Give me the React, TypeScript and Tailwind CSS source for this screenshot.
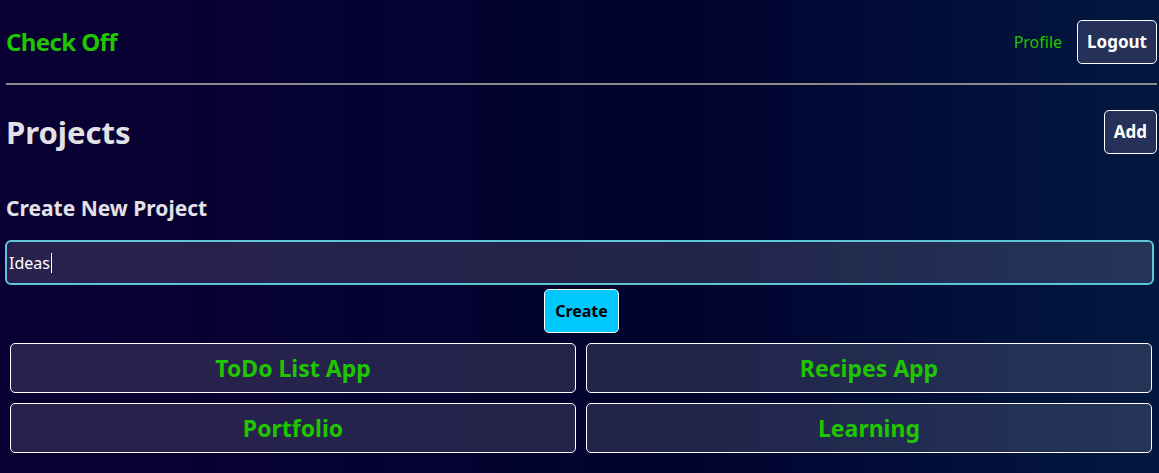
export default function App() {
  const projects = ['ToDo List App', 'Recipes App', 'Portfolio', 'Learning'];

  return (
    <main
      className="min-h-screen w-full bg-gradient-to-r from-[#0a0033] via-[#01042f] via-60% to-[#03183f] pl-[6px] pr-[2px] text-[#e2e2e6]"
      style={{ fontFamily: '"Noto Sans", "Open Sans", sans-serif' }}
    >
      {/* header */}
      <header className="flex h-[83px] items-center justify-between">
        <h1 className="text-[24px] font-bold tracking-tight text-[#1fc600]">Check Off</h1>
        <nav className="flex items-center gap-[15px]">
          <a className="text-[16px] text-[#1fc600]">Profile</a>
          <button className="h-[44px] rounded-[5px] border border-white bg-[#26315a] px-[9px] text-[17px] font-bold text-white">
            Logout
          </button>
        </nav>
      </header>
      <hr className="border-t-2 border-[#8a8a8a]" />

      {/* projects title */}
      <div className="mt-[25px] flex items-center justify-between">
        <h2 className="text-[31px] font-bold leading-none">Projects</h2>
        <button className="h-[44px] rounded-[5px] border border-white bg-[#26315a] px-[9px] text-[17px] font-bold text-white">
          Add
        </button>
      </div>

      {/* create form */}
      <h3 className="mt-[44px] text-[21px] font-bold leading-none">Create New Project</h3>
      <div className="mt-[21px] pr-[3px]">
        <div className="-ml-[1px] flex h-[45px] items-center rounded-[6px] border-2 border-[#5cc5d6] bg-white/[0.13] px-[2px] text-[16px] text-white">
          Ideas<span className="ml-[1px] inline-block h-[20px] w-px bg-white" />
        </div>
      </div>
      <div className="mt-[4px] flex justify-center">
        <button className="h-[44px] rounded-[5px] border border-white bg-[#00c8ff] px-[10px] text-[16px] font-bold text-black">
          Create
        </button>
      </div>

      {/* project cards */}
      <div className="mt-[10px] grid grid-cols-2 gap-[10px] pl-[4px] pr-[5px]">
        {projects.map((p) => (
          <div
            key={p}
            className="flex h-[50px] items-center justify-center rounded-[5px] border border-white bg-white/[0.13] text-[23px] font-bold text-[#1fc600]"
          >
            {p}
          </div>
        ))}
      </div>
    </main>
  );
}
